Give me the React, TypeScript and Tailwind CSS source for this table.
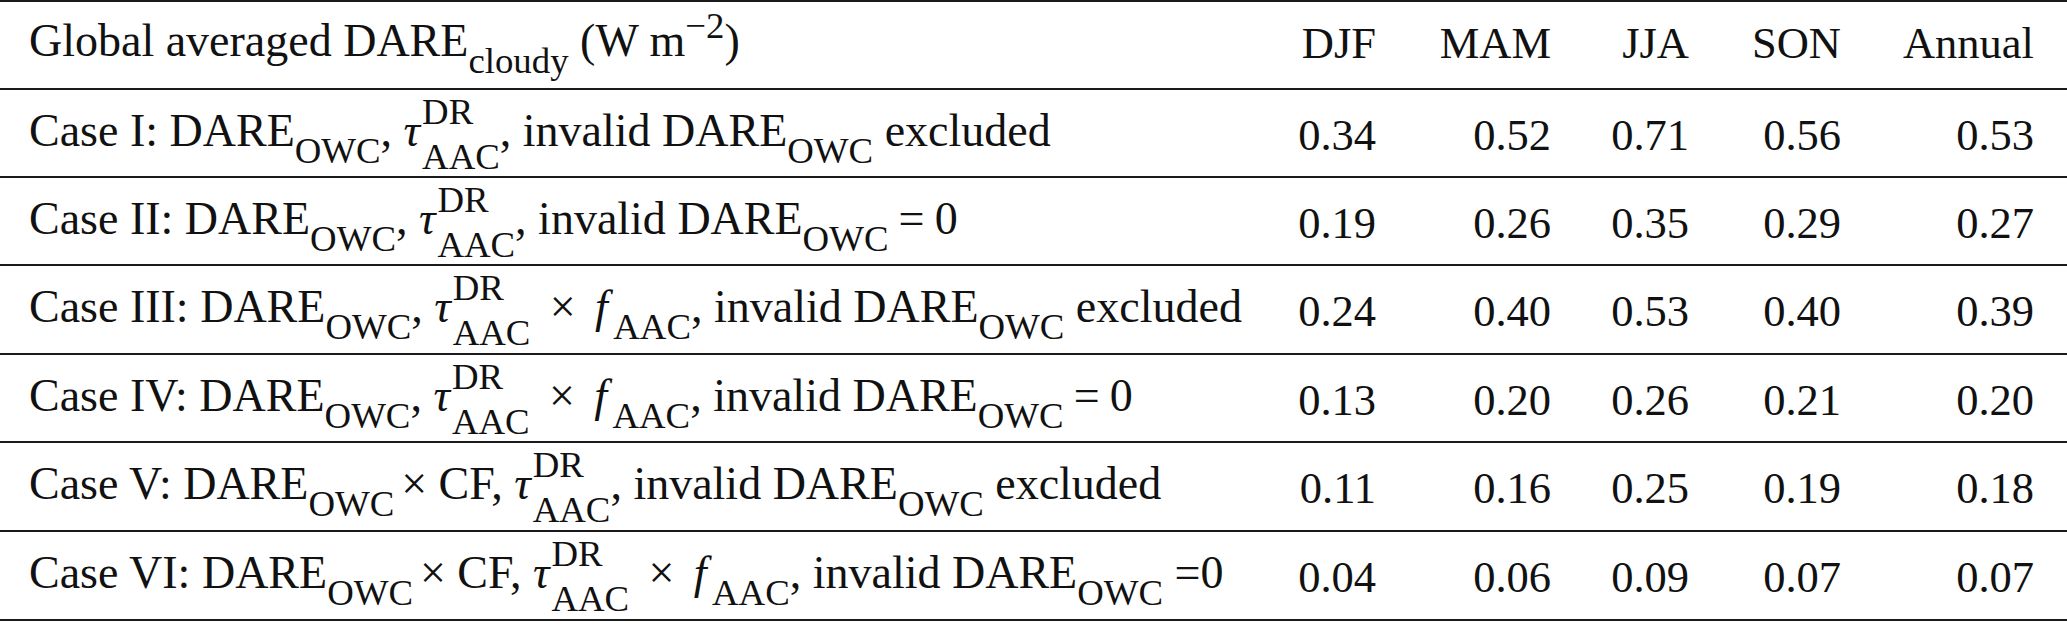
import React from "react";

const Sub = ({ children }: { children: React.ReactNode }) => (
  <span className="text-[0.8em] align-[-0.46em] leading-none">{children}</span>
);

const Sup = ({ children }: { children: React.ReactNode }) => (
  <span className="text-[0.8em] align-[0.5em] leading-none">{children}</span>
);

const Tau = () => (
  <>
    <span className="italic">τ</span>
    <span className="inline-flex flex-col text-[0.8em] leading-[1.22em] align-[0.6em] ml-[2px]">
      <span>DR</span>
      <span>AAC</span>
    </span>
  </>
);

const Dare = ({ sub }: { sub: string }) => (
  <>
    DARE<Sub>{sub}</Sub>
  </>
);

const F = () => (
  <>
    <span className="italic mr-[0.12em]">f</span>
    <Sub>AAC</Sub>
  </>
);

const Times = () => <span className="mx-[0.42em]">×</span>;

const Eq = () => <span className="mx-[0.22em]">=</span>;

type Row = { label: React.ReactNode; values: string[] };

const rows: Row[] = [
  {
    label: (
      <>
        Case I: <Dare sub="OWC" />, <Tau />, invalid <Dare sub="OWC" /> excluded
      </>
    ),
    values: ["0.34", "0.52", "0.71", "0.56", "0.53"],
  },
  {
    label: (
      <>
        Case II: <Dare sub="OWC" />, <Tau />, invalid <Dare sub="OWC" />
        <Eq />0
      </>
    ),
    values: ["0.19", "0.26", "0.35", "0.29", "0.27"],
  },
  {
    label: (
      <>
        Case III: <Dare sub="OWC" />, <Tau />
        <Times />
        <F />, invalid <Dare sub="OWC" /> excluded
      </>
    ),
    values: ["0.24", "0.40", "0.53", "0.40", "0.39"],
  },
  {
    label: (
      <>
        Case IV: <Dare sub="OWC" />, <Tau />
        <Times />
        <F />, invalid <Dare sub="OWC" />
        <Eq />0
      </>
    ),
    values: ["0.13", "0.20", "0.26", "0.21", "0.20"],
  },
  {
    label: (
      <>
        Case V: <Dare sub="OWC" />
        <span className="ml-[0.15em]">×</span> CF, <Tau />, invalid <Dare sub="OWC" /> excluded
      </>
    ),
    values: ["0.11", "0.16", "0.25", "0.19", "0.18"],
  },
  {
    label: (
      <>
        Case VI: <Dare sub="OWC" />
        <span className="ml-[0.15em]">×</span> CF, <Tau />
        <Times />
        <F />, invalid <Dare sub="OWC" /> =0
      </>
    ),
    values: ["0.04", "0.06", "0.09", "0.07", "0.07"],
  },
];

const heights = ["h-[88px]", "h-[88px]", "h-[89px]", "h-[88px]", "h-[89px]", "h-[89px]"];

const cols = "grid grid-cols-[1376px_175px_138px_152px_226px] items-center pb-[4px]";

export default function App() {
  return (
    <div className="w-[2067px] h-[635px] bg-white text-[#111] font-['Liberation_Serif','Times_New_Roman',serif] text-[44.5px] overflow-hidden">
      <div className="border-t-2 border-[#1a1a1a]">
        <div className={`${cols} h-[88px] border-b-2 border-[#1a1a1a]`}>
          <div className="flex items-center justify-between">
            <div className="pl-[29px] whitespace-nowrap text-[46px]">
              Global averaged DARE<Sub>cloudy</Sub> (W m<Sup>−2</Sup>)
            </div>
            <div className="text-right">DJF</div>
          </div>
          <div className="text-right">MAM</div>
          <div className="text-right">JJA</div>
          <div className="text-right">SON</div>
          <div className="text-right pr-[33px]">Annual</div>
        </div>
        {rows.map((r, i) => (
          <div key={i} className={`${cols} ${heights[i]} border-b-2 border-[#1a1a1a]`}>
            <div className="flex items-center justify-between">
              <div className="pl-[29px] whitespace-nowrap text-[46px]">{r.label}</div>
              <div className="text-right">{r.values[0]}</div>
            </div>
            {r.values.slice(1).map((v, j) => (
              <div key={j} className={j === 3 ? "text-right pr-[33px]" : "text-right"}>
                {v}
              </div>
            ))}
          </div>
        ))}
      </div>
    </div>
  );
}
